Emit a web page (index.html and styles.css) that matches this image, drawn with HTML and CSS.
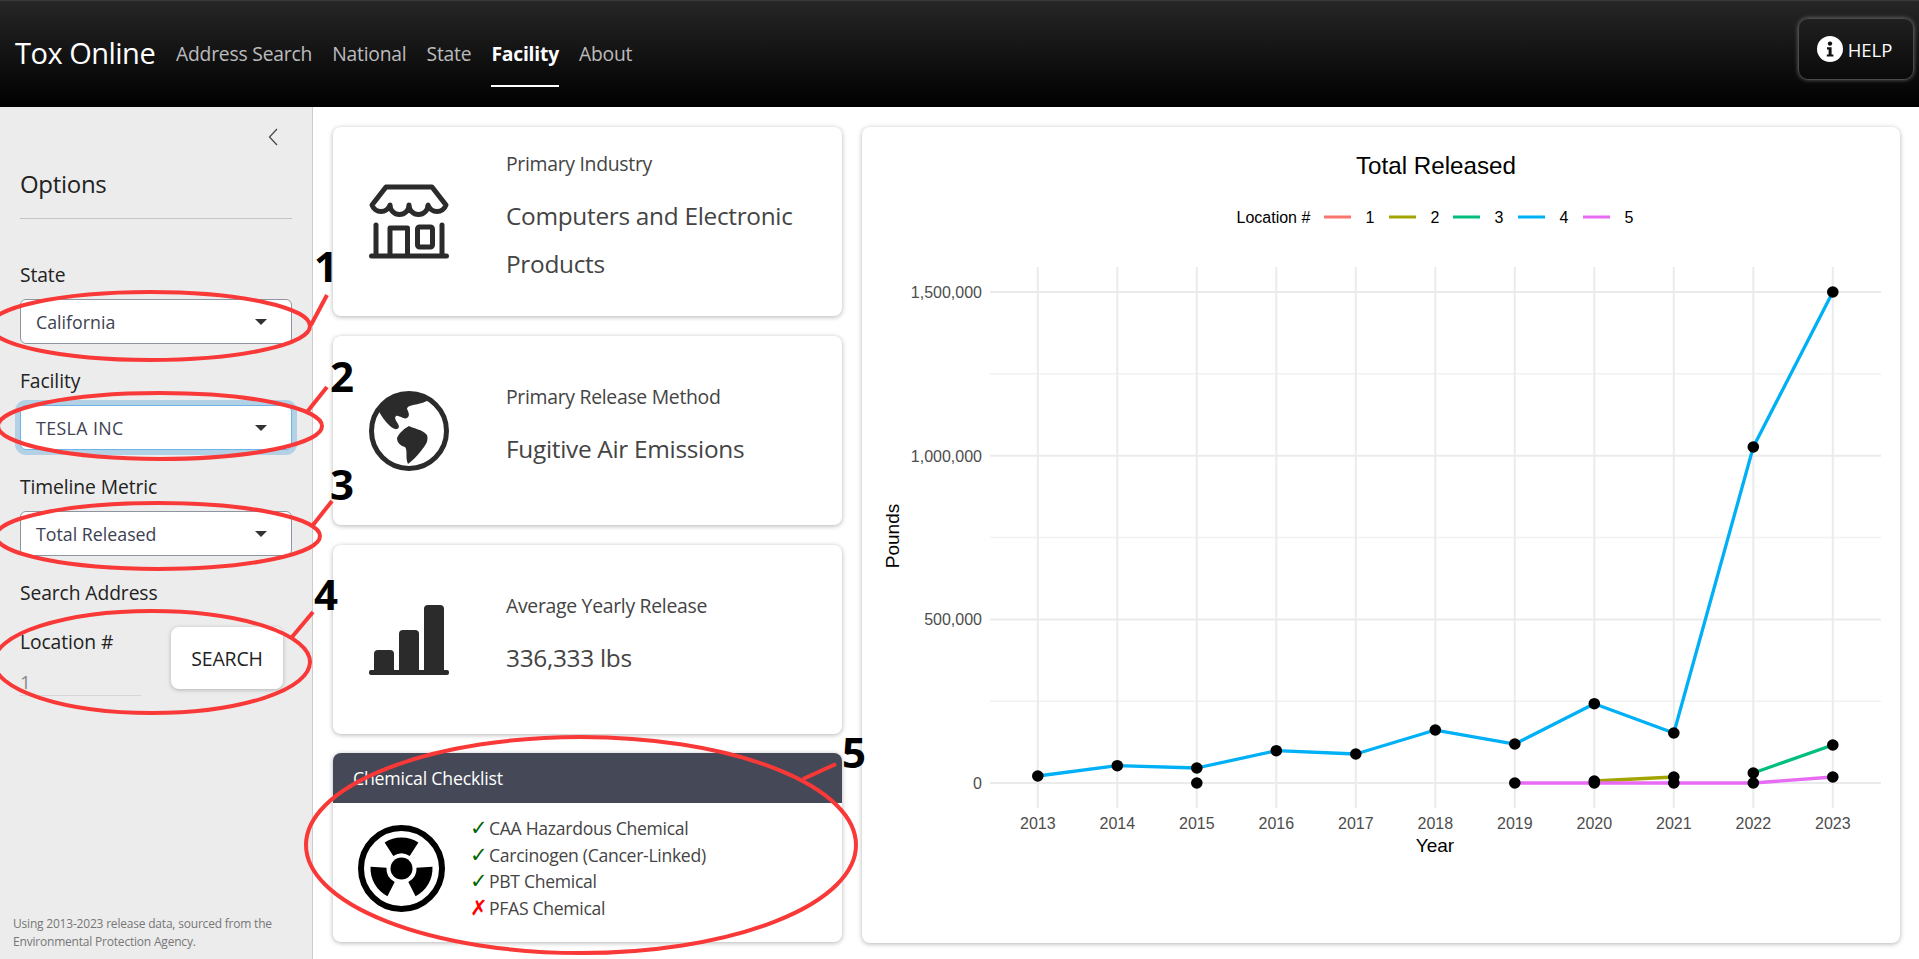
FILE: index.html
```html
<!DOCTYPE html>
<html lang="en">
<head>
<meta charset="utf-8">
<title>Tox Online</title>
<link rel="stylesheet" href="styles.css">
</head>
<body>
<header class="topbar">
  <span class="brand">Tox Online</span>
  <nav class="nav">
    <a class="nav-link">Address Search</a>
    <a class="nav-link">National</a>
    <a class="nav-link">State</a>
    <a class="nav-link active">Facility</a>
    <a class="nav-link">About</a>
  </nav>
  <button class="help">
    <svg class="help-icon" viewBox="0 0 26 26"><circle cx="13" cy="13" r="13" fill="#fff"/><circle cx="13" cy="7.6" r="2.2" fill="#111"/><path d="M10 11.2h4.6v7.2h1.8v2.2h-6.6v-2.2h1.8v-5h-1.6z" fill="#111"/></svg>
    HELP
  </button>
</header>
<div class="layout">
  <aside class="sidebar">
    <div class="collapse-row">
      <svg class="chevron" viewBox="0 0 10 18"><path d="M9 1 1.5 9 9 17" fill="none" stroke="#444" stroke-width="1.2"/></svg>
    </div>
    <h2 class="side-title">Options</h2>
    <hr class="side-rule">
    <div class="field">
      <label class="field-label">State</label>
      <div class="select"><span>California</span><i class="caret"></i></div>
    </div>
    <div class="field">
      <label class="field-label">Facility</label>
      <div class="select focused"><span class="caps">TESLA INC</span><i class="caret"></i></div>
    </div>
    <div class="field">
      <label class="field-label">Timeline Metric</label>
      <div class="select"><span>Total Released</span><i class="caret"></i></div>
    </div>
    <div class="field-label">Search Address</div>
    <div class="search-row">
      <div class="location">
        <label class="field-label">Location #</label>
        <div class="num-input">1</div>
      </div>
      <button class="search-btn">SEARCH</button>
    </div>
    <p class="side-note">Using 2013-2023 release data, sourced from the Environmental Protection Agency.</p>
  </aside>
  <main class="content">
    <section class="card stat">
      <div class="stat-icon">
        <svg class="icon" viewBox="0 0 80 75" fill="none" stroke="#2b2b2b" stroke-width="5" stroke-linejoin="round" stroke-linecap="round">
          <path d="M17 3H63L77 21A9.5 9.5 0 0 1 59 21 9.5 9.5 0 0 1 40 21 9.5 9.5 0 0 1 21 21 9.5 9.5 0 0 1 3 21Z"/>
          <path d="M7 41V71M73 41V71M2.5 72H77.5M21 71V44H38.5V71"/>
          <rect x="48.500" y="43" width="15" height="20" rx="2"/>
        </svg>
      </div>
      <div class="stat-body">
        <div class="stat-label">Primary Industry</div>
        <div class="stat-value">Computers and Electronic Products</div>
      </div>
    </section>
    <section class="card stat">
      <div class="stat-icon">
        <svg class="icon" viewBox="0 0 80 80">
          <circle cx="40" cy="40" r="37.500" fill="#fff" stroke="#2b2b2b" stroke-width="5"/>
          <path d="M9 19C13 26 16 30 20 34C24 38 28 40 30 36C30 32 24 28 27 25C30 24 35 29 38 27C41 25 40 22 38 18C38 15 44 14 49 13C53 12 56 11 60 9C50 1 26 -1 9 19Z" fill="#2b2b2b"/>
          <path d="M28 47C30 42 36 37 40 35C45 38 53 38 58 44C60 50 56 55 52 60C47 66 43 70 39 73C36 66 39 60 36 56C32 55 28 52 28 47Z" fill="#2b2b2b"/>
        </svg>
      </div>
      <div class="stat-body">
        <div class="stat-label">Primary Release Method</div>
        <div class="stat-value">Fugitive Air Emissions</div>
      </div>
    </section>
    <section class="card stat">
      <div class="stat-icon">
        <svg class="icon" viewBox="0 0 80 70" fill="#2b2b2b">
          <path d="M5 66V49Q5 45 9 45H21Q25 45 25 49V66Z"/>
          <path d="M30 66V29Q30 25 34 25H46Q50 25 50 29V66Z"/>
          <path d="M55 66V4Q55 0 59 0H71Q75 0 75 4V66Z"/>
          <rect x="0" y="65" width="80" height="5" rx="2"/>
        </svg>
      </div>
      <div class="stat-body">
        <div class="stat-label">Average Yearly Release</div>
        <div class="stat-value">336,333 lbs</div>
      </div>
    </section>
    <section class="card checklist">
      <div class="check-head">Chemical Checklist</div>
      <div class="check-body">
        <svg class="rad-icon" viewBox="0 0 87 87">
          <circle cx="43.500" cy="43.500" r="40.500" fill="#fff" stroke="#000" stroke-width="6"/>
          <circle cx="43.500" cy="43.500" r="11"/>
          <g transform="translate(43.500 43.500)">
            <path d="M-16.900 -26A31 31 0 0 1 16.900 -26L8.200 -12.600A15 15 0 0 0 -8.200 -12.600Z"/>
            <path transform="rotate(120)" d="M-16.900 -26A31 31 0 0 1 16.900 -26L8.200 -12.600A15 15 0 0 0 -8.200 -12.600Z"/>
            <path transform="rotate(240)" d="M-16.900 -26A31 31 0 0 1 16.900 -26L8.200 -12.600A15 15 0 0 0 -8.200 -12.600Z"/>
          </g>
        </svg>
        <ul class="check-list">
          <li><span class="mark yes">✓</span>CAA Hazardous Chemical</li>
          <li><span class="mark yes">✓</span>Carcinogen (Cancer-Linked)</li>
          <li><span class="mark yes">✓</span>PBT Chemical</li>
          <li><span class="mark no">✗</span>PFAS Chemical</li>
        </ul>
      </div>
    </section>
    <section class="card chart-card">
      <svg class="chart" viewBox="862 127 1038 816" width="1038" height="816">
        <g class="grid-minor">
          <path d="M990 373.800H1881M990 537.500H1881M990 701.200H1881"/>
        </g>
        <g class="grid-major">
          <path d="M990 292H1881M990 455.700H1881M990 619.400H1881M990 783H1881"/>
          <path d="M1037.800 267V808M1117.300 267V808M1196.800 267V808M1276.300 267V808M1355.800 267V808M1435.300 267V808M1514.800 267V808M1594.300 267V808M1673.800 267V808M1753.300 267V808M1832.800 267V808"/>
        </g>
        <text class="c-title" x="1436" y="174">Total Released</text>
        <text class="c-legend" x="1236.500" y="223">Location #</text>
        <g class="legend-keys">
          <path stroke="#F8766D" d="M1324 217H1351"/>
          <path stroke="#A3A500" d="M1389 217H1416"/>
          <path stroke="#00BF7D" d="M1453 217H1480"/>
          <path stroke="#00B0F6" d="M1518 217H1545"/>
          <path stroke="#E76BF3" d="M1583 217H1610"/>
        </g>
        <g class="c-legend mid">
          <text x="1370" y="223">1</text><text x="1435" y="223">2</text><text x="1499" y="223">3</text><text x="1564" y="223">4</text><text x="1629" y="223">5</text>
        </g>
        <g class="c-tick end">
          <text x="982" y="298">1,500,000</text>
          <text x="982" y="461.500">1,000,000</text>
          <text x="982" y="625">500,000</text>
          <text x="982" y="789">0</text>
        </g>
        <g class="c-tick mid">
          <text x="1037.800" y="829">2013</text><text x="1117.300" y="829">2014</text><text x="1196.800" y="829">2015</text><text x="1276.300" y="829">2016</text><text x="1355.800" y="829">2017</text><text x="1435.300" y="829">2018</text><text x="1514.800" y="829">2019</text><text x="1594.300" y="829">2020</text><text x="1673.800" y="829">2021</text><text x="1753.300" y="829">2022</text><text x="1832.800" y="829">2023</text>
        </g>
        <text class="c-axis" x="1435" y="852">Year</text>
        <text class="c-axis" transform="translate(899 536) rotate(-90)">Pounds</text>
        <g class="series">
          <path stroke="#A3A500" d="M1594.300 781L1673.800 777"/>
          <path stroke="#00BF7D" d="M1753.300 773L1832.800 745"/>
          <path stroke="#00B0F6" d="M1037.800 776L1117.300 765.700 1196.800 768 1276.300 750.700 1355.800 754 1435.300 730 1514.800 744 1594.300 703.700 1673.800 733 1753.300 447 1832.800 292"/>
          <path stroke="#E76BF3" d="M1514.800 783L1594.300 783 1673.800 783 1753.300 783 1832.800 777"/>
        </g>
        <g class="points">
          <circle cx="1037.800" cy="776" r="5.800"/><circle cx="1117.300" cy="765.700" r="5.800"/><circle cx="1196.800" cy="768" r="5.800"/><circle cx="1276.300" cy="750.700" r="5.800"/><circle cx="1355.800" cy="754" r="5.800"/><circle cx="1435.300" cy="730" r="5.800"/><circle cx="1514.800" cy="744" r="5.800"/><circle cx="1594.300" cy="703.700" r="5.800"/><circle cx="1673.800" cy="733" r="5.800"/><circle cx="1753.300" cy="447" r="5.800"/><circle cx="1832.800" cy="292" r="5.800"/>
          <circle cx="1196.800" cy="783" r="5.800"/><circle cx="1514.800" cy="783" r="5.800"/><circle cx="1594.300" cy="783" r="5.800"/><circle cx="1594.300" cy="781" r="5.800"/><circle cx="1673.800" cy="783" r="5.800"/><circle cx="1673.800" cy="777" r="5.800"/><circle cx="1753.300" cy="783" r="5.800"/><circle cx="1753.300" cy="773" r="5.800"/><circle cx="1832.800" cy="777" r="5.800"/><circle cx="1832.800" cy="745" r="5.800"/>
        </g>
      </svg>
    </section>
  </main>
</div>
<svg class="annotations" viewBox="0 0 1919 959" width="1919" height="959">
  <g class="marks">
    <ellipse cx="150" cy="326" rx="160" ry="34"/>
    <path d="M311 325 327 295"/>
    <ellipse cx="160" cy="426" rx="162" ry="33"/>
    <path d="M307 412 327 387"/>
    <ellipse cx="158" cy="536" rx="162" ry="33"/>
    <path d="M313 525 332 501"/>
    <ellipse cx="152" cy="662" rx="158" ry="51"/>
    <path d="M292 637 313 612"/>
    <ellipse cx="581" cy="845" rx="275" ry="108"/>
    <path d="M803 779 836 764"/>
  </g>
  <g class="numbers">
    <text x="314" y="282">1</text>
    <text x="330" y="392">2</text>
    <text x="330" y="500">3</text>
    <text x="314" y="610">4</text>
    <text x="842" y="768">5</text>
  </g>
</svg>
</body>
</html>
```
FILE: styles.css
```css
* { box-sizing: border-box; }
html, body { margin: 0; height: 100%; }
body {
  width: 1919px;
  height: 959px;
  overflow: hidden;
  position: relative;
  display: flex;
  flex-direction: column;
  font-family: "Open Sans", "Noto Sans", sans-serif;
  color: #333;
  background: #fff;
}
.topbar {
  height: 107px;
  flex: none;
  display: flex;
  align-items: center;
  padding: 0 5px 0 15px;
  background: linear-gradient(#262626, #000);
  border-top: 1px solid #3a3a3a;
}
.brand { font-size: 29px; color: #fff; width: 150px; letter-spacing: -0.5px; margin-bottom: 3px; white-space: nowrap; }
.nav { display: flex; gap: 20px; height: 100%; margin-left: 11px; }
.nav-link {
  display: flex;
  align-items: center;
  height: 86px;
  padding-top: 20px;
  font-size: 19.300px;
  letter-spacing: -0.2px;
  color: rgba(255,255,255,.72);
  border-bottom: 2px solid transparent;
}
.nav-link.active { color: #fff; font-weight: 700; border-bottom-color: #fff; }
.help {
  margin-left: auto;
  margin-bottom: 10px;
  width: 116px;
  height: 62px;
  display: flex;
  align-items: center;
  justify-content: center;
  gap: 5px;
  font: 18.500px "Open Sans", sans-serif;
  color: #fff;
  background: transparent;
  border: 1px solid #4a4a4a;
  border-radius: 10px;
  box-shadow: 0 0 4px rgba(255,255,255,.35);
}
.help-icon { width: 26px; height: 26px; margin-left: -3px; }
.layout { flex: 1; display: flex; min-height: 0; }
.sidebar {
  width: 313px;
  flex: none;
  background: #ececec;
  border-right: 1px solid #ccc;
  padding: 0 20px 0 20px;
  display: flex;
  flex-direction: column;
}
.collapse-row { height: 59px; display: flex; justify-content: flex-end; align-items: center; padding-right: 14px; }
.chevron { width: 10px; height: 18px; }
.side-title { margin: 0; font-size: 24px; font-weight: 400; line-height: 36px; height: 36px; color: #222; letter-spacing: -0.3px; }
.side-rule { margin: 16px 0 44px; border: 0; border-top: 1px solid #c4c4c4; }
.field { margin-bottom: 25px; }
.field-label { display: block; font-size: 19.300px; line-height: 24px; color: #222; letter-spacing: -0.1px; white-space: nowrap; }
.select {
  margin-top: 12px;
  height: 45px;
  background: #fff;
  border: 1px solid #8f95a0;
  border-radius: 6px;
  padding: 0 24px 0 15px;
  display: flex;
  align-items: center;
  justify-content: space-between;
  font-size: 17.800px;
  color: #3d4250;
}
.caps { letter-spacing: 0.4px; }
.select.focused { border-color: #6db3e8; box-shadow: 0 0 0 5px #b3d1e5; }
.caret { width: 0; height: 0; border-left: 6px solid transparent; border-right: 6px solid transparent; border-top: 6px solid #333; }
.search-row { display: flex; gap: 30px; margin-top: 22px; }
.location { width: 121px; padding-top: 3px; }
.num-input { margin-top: 16px; height: 26px; line-height: 24px; font-size: 19px; color: #888; border-bottom: 1px solid #d6d6d6; }
.search-btn {
  width: 112px;
  height: 62px;
  background: #fff;
  border: 0;
  border-radius: 8px;
  box-shadow: 0 1px 4px rgba(0,0,0,.25);
  font: 19.500px "Open Sans", sans-serif;
  letter-spacing: -0.2px;
  color: #222;
}
.side-note { margin: auto -8px 8px -7px; font-size: 12px; line-height: 18px; color: #777; letter-spacing: -0.2px; }
.content {
  flex: 1;
  padding: 20px 19px 16px 20px;
  display: grid;
  grid-template-columns: 509px 1038px;
  grid-template-rows: repeat(4, 189px);
  column-gap: 20px;
  row-gap: 20px;
}
.card {
  background: #fff;
  border-radius: 8px;
  box-shadow: 0 1px 5px rgba(0,0,0,.3);
  overflow: hidden;
}
.stat { display: flex; align-items: center; }
.stat-icon { width: 173px; padding-left: 36px; flex: none; display: flex; }
.icon { width: 80px; display: block; }
.stat-body { flex: 1; padding: 0 20px 5px 0; }
.stat-label { font-size: 19.400px; line-height: 28px; color: #444; letter-spacing: -0.3px; white-space: nowrap; }
.stat-value { font-size: 24.400px; line-height: 48px; color: #444; margin-top: 14px; letter-spacing: -0.3px; }
.chart-card { grid-column: 2; grid-row: 1 / 5; }
.chart { display: block; }
.checklist { display: flex; flex-direction: column; margin: -1px 0 1px; }
.check-head { height: 50px; background: #454856; color: #fff; font-size: 17.700px; line-height: 50px; padding-left: 20px; letter-spacing: -0.2px; flex: none; }
.check-body { flex: 1; display: flex; position: relative; padding: 22px 0 0 25px; }
.rad-icon { width: 87px; height: 87px; flex: none; }
.check-list { list-style: none; margin: -10px 0 0 26px; padding: 0; font-size: 17.600px; line-height: 26.500px; color: #444; letter-spacing: -0.3px; white-space: nowrap; }
.mark { display: inline-block; width: 19px; margin-left: -1px; font-family: "DejaVu Sans", sans-serif; font-size: 21px; line-height: 20px; }
.mark.yes { color: #006400; }
.mark.no { color: #f00; }
.grid-major path { stroke: #ebebeb; stroke-width: 2; fill: none; }
.grid-minor path { stroke: #f2f2f2; stroke-width: 1.500; fill: none; }
.chart text { font-family: "Liberation Sans", Arial, sans-serif; }
.c-title { font-size: 24.200px; text-anchor: middle; fill: #000; }
.c-legend { font-size: 16px; fill: #000; }
.mid text { text-anchor: middle; }
.end text { text-anchor: end; }
.c-tick { font-size: 16px; fill: #4d4d4d; }
.c-axis { font-size: 19px; fill: #000; text-anchor: middle; }
.legend-keys path { stroke-width: 3; fill: none; }
.series path { stroke-width: 3.300; fill: none; stroke-linejoin: round; }
.annotations { position: absolute; left: 0; top: 0; pointer-events: none; }
.marks ellipse, .marks path { fill: none; stroke: #f93838; stroke-width: 4; }
.numbers text { font-family: "Open Sans", sans-serif; font-weight: 700; font-size: 42px; fill: #000; }
```
